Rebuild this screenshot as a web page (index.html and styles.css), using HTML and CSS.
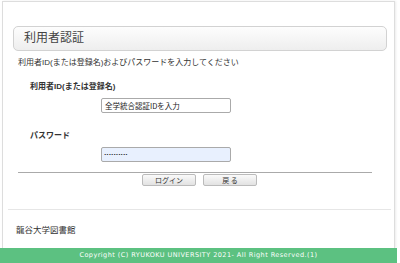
FILE: index.html
```html
<!DOCTYPE html>
<html lang="ja">
<head>
  <meta charset="UTF-8" />
  <meta name="viewport" content="width=device-width, initial-scale=1" />
  <title>利用者認証</title>
  <link rel="stylesheet" href="styles.css">
</head>
<body>
  <div class="page">
    <h2 class="title">利用者認証</h2>
    <p class="intro">利用者ID(または登録名)およびパスワードを入力してください</p>
    <form class="login-form">
      <div class="field">
        <label for="uid">利用者ID(または登録名)</label>
        <input type="text" id="uid" placeholder="全学統合認証IDを入力" />
      </div>
      <div class="field">
        <label for="pw">パスワード</label>
        <input type="password" id="pw" class="filled" value="abcdefghij" />
      </div>
      <hr class="rule" />
      <div class="buttons">
        <button type="submit">ログイン</button>
        <button type="button">戻 る</button>
      </div>
    </form>
    <div class="library">龍谷大学図書館</div>
  </div>
  <div class="footer">Copyright (C) RYUKOKU UNIVERSITY 2021- All Right Reserved.(1)</div>
</body>
</html>
```

FILE: styles.css
```css
body {
  margin: 0;
  background: #fff;
  font-family: "Liberation Sans", "Noto Sans CJK JP", sans-serif;
  color: #333;
}
.page {
  box-sizing: border-box;
  height: 247px;
  margin: 1px 5px 0 2px;
  padding-top: 24px;
  border: 1px solid #ddd;
  border-bottom: none;
  box-shadow: 1px 0 2px rgba(0,0,0,0.08);
}
.title {
  box-sizing: border-box;
  height: 25px;
  margin: 0 7px 0 10px;
  padding-left: 10px;
  border: 1px solid #d2d2d2;
  border-radius: 5px;
  background: linear-gradient(#fdfdfd, #eeeeee);
  font-size: 12px;
  font-weight: normal;
  line-height: 23px;
  color: #444;
}
.intro {
  margin: 6px 0 0 15px;
  font-size: 8px;
  line-height: 12px;
}
.login-form {
  margin-top: 12px;
}
.field label {
  display: block;
  margin-left: 27px;
  font-size: 8px;
  font-weight: bold;
  line-height: 12px;
}
.field input {
  display: block;
  box-sizing: border-box;
  width: 130px;
  height: 15px;
  margin: 5px 0 17px 98px;
  padding: 0 3px;
  border: 1px solid #aaa;
  border-radius: 2px;
  font-family: "Noto Sans CJK JP", sans-serif;
  font-size: 7.5px;
  color: #222;
}
.field input::placeholder {
  color: #222;
}
.field input.filled {
  padding-left: 2px;
  background: #e8f0fe;
  font-family: "DejaVu Sans", sans-serif;
  font-size: 4px;
  letter-spacing: 0;
}
.field:nth-child(2) input {
  margin-bottom: 0;
}
.rule {
  margin: 10px 22px 0 15px;
  border: none;
  border-top: 1px solid #aaa;
  height: 0;
}
.buttons {
  display: flex;
  justify-content: center;
  gap: 7px;
  margin: 1px 0 0 2px;
}
.buttons button {
  width: 54px;
  height: 12px;
  padding: 0;
  border: 1px solid #bbb;
  border-radius: 2px;
  background: linear-gradient(#fafafa, #e2e2e2);
  font-family: "Noto Sans CJK JP", sans-serif;
  font-size: 7px;
  line-height: 10px;
  color: #333;
}
.library {
  margin: 23px 3px 0 5px;
  padding: 13px 0 0 8px;
  border-top: 1px solid #e6e6e6;
  font-family: "Noto Sans CJK JP", sans-serif;
  font-size: 8.5px;
  color: #333;
}
.footer {
  height: 15px;
  margin-right: 3px;
  background: #5cc181;
  color: #fff;
  font-family: "DejaVu Sans", sans-serif;
  font-size: 6.5px;
  line-height: 15px;
  text-align: center;
  letter-spacing: 0.45px;
}
```
